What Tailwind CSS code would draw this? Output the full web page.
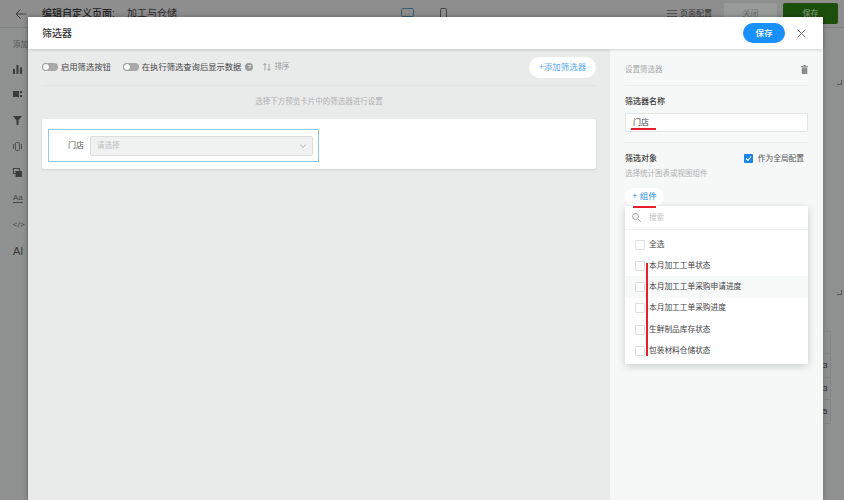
<!DOCTYPE html>
<html lang="zh-CN">
<head>
    <meta charset="UTF-8">
    <meta name="viewport" content="width=device-width, initial-scale=1.0">
    <script src="https://cdn.jsdelivr.net/npm/@tailwindcss/browser@4"></script>
    <title>筛选器</title>
</head>
<body class="relative h-[500px] w-[844px] overflow-hidden whitespace-nowrap bg-[#8f9191] font-['Liberation_Sans','Noto_Sans_CJK_SC',sans-serif] text-[#2f2f2f]">
    <!-- page behind the dialog -->
    <div class="flex h-[28px] items-center border-b border-[#7f8181] bg-[#8e8e8e] pl-[15px] pr-[6px]">
        <svg class="h-[12px] w-[12px] shrink-0 text-[#3c3c3c]" viewBox="0 0 12 12" fill="none" stroke="currentColor" stroke-width="1"><path d="M11.5 6H1M5.5 1.5 1 6l4.5 4.5"/></svg>
        <span class="ml-[15px] w-[73px] shrink-0 text-[10px] font-medium text-[#222]">编辑自定义页面:</span>
        <span class="ml-[12px] w-[50px] shrink-0 text-[10px] text-[#2a2a2a]">加工与仓储</span>
        <svg class="ml-[224px] h-[11px] w-[13px] shrink-0 text-[#3b5a72]" viewBox="0 0 13 11" fill="none" stroke="currentColor"><rect x="0.5" y="0.5" width="12" height="8" rx="1"/><path d="M4 10.5h5"/></svg>
        <svg class="ml-[26px] h-[12px] w-[7px] shrink-0 text-[#444]" viewBox="0 0 7 12" fill="none" stroke="currentColor"><rect x="0.5" y="0.5" width="6" height="11" rx="1"/></svg>
        <svg class="ml-[220px] h-[9px] w-[10px] shrink-0 text-[#444]" viewBox="0 0 10 9" fill="none" stroke="currentColor" stroke-width="0.8"><path d="M0 1.5h10M0 4.5h10M0 7.5h10"/></svg>
        <span class="ml-[3px] w-[32px] shrink-0 text-[8px] text-[#333]">页面配置</span>
        <span class="ml-[12px] flex h-[21px] w-[53px] shrink-0 items-center justify-center rounded-[2px] bg-[#999b9b] text-[8px] text-[#6e6e6e]">关闭</span>
        <span class="ml-[6px] flex h-[21px] w-[55px] shrink-0 items-center justify-center rounded-[2px] bg-[#1c4f0b] text-[8px] text-[#8fa588]">保存</span>
    </div>
    <div class="flex h-[472px]">
        <div class="flex w-[28px] shrink-0 flex-col items-start border-r border-[#7d7f7f] pl-[13px] text-[#3b3b3b]">
            <span class="mt-[11px] w-[15px] overflow-hidden text-[7.5px] text-[#555]">添加</span>
            <svg class="mt-[15px] h-[9px] w-[9px]" viewBox="0 0 9 9" fill="currentColor"><path d="M0 4h2v5H0zM3.5 0h2v9h-2zM7 2.5h2V9H7z"/></svg>
            <svg class="mt-[16px] h-[8px] w-[9px]" viewBox="0 0 9 8" fill="currentColor"><path d="M0 1h6v6H0zM7 1h2v2H7zM7 5h2v2H7z"/></svg>
            <svg class="mt-[18px] h-[9px] w-[9px]" viewBox="0 0 9 9" fill="currentColor"><path d="M0 0h9L5.5 4.5V9h-2V4.500z"/></svg>
            <svg class="mt-[17px] h-[9px] w-[9px]" viewBox="0 0 9 9" fill="none" stroke="currentColor" stroke-width="0.8"><rect x="2.5" y="0.5" width="4" height="8" rx="1"/><path d="M0.5 2v5M8.5 2v5"/></svg>
            <svg class="mt-[17px] h-[9px] w-[9px]" viewBox="0 0 9 9" fill="none" stroke="currentColor" stroke-width="0.9"><rect x="0.5" y="0.5" width="6" height="5"/><rect x="3" y="3.5" width="5.5" height="5" fill="currentColor"/></svg>
            <span class="mt-[16px] border-b border-[#444] text-[8px] leading-[9px] text-[#444]">Aa</span>
            <span class="mt-[17px] text-[8px] leading-[9px] text-[#444]">&lt;/&gt;</span>
            <span class="mt-[16px] text-[11px] font-medium leading-[12px] text-[#3b3b3b]">AI</span>
        </div>
        <!-- leftover bits of the page to the right of the dialog -->
        <div class="ml-auto flex w-[21px] flex-col items-start text-[8px] text-[#222]">
            <span class="ml-[14px] mt-[52px] h-[5px] w-[5px] border-b border-r border-[#555]"></span>
            <span class="ml-[14px] mt-[205px] h-[5px] w-[5px] border-b border-r border-[#555]"></span>
            <span class="mt-[36px] h-[23px] w-[8px] border-y border-r border-[#858787]"></span>
            <span class="flex h-[24px] w-[8px] items-center border-b border-r border-[#858787]">3</span>
            <span class="flex h-[22px] w-[8px] items-center border-b border-r border-[#858787]">3</span>
            <span class="flex h-[24px] w-[8px] items-center border-b border-r border-[#858787]">5</span>
        </div>
    </div>

    <!-- dialog -->
    <div class="absolute left-[28px] top-[17px] flex h-[483px] w-[795px] flex-col bg-white shadow-[0_0_6px_rgba(0,0,0,0.25)]">
        <div class="z-10 flex h-[32px] shrink-0 items-center bg-white pl-[14px] pr-[17px] shadow-[0_1px_3px_rgba(0,0,0,0.15)]">
            <span class="text-[10px] font-medium text-[#333]">筛选器</span>
            <button class="ml-auto flex h-[20px] w-[42px] items-center justify-center rounded-full bg-[#1890ff] text-[8.5px] font-medium text-white">保存</button>
            <svg class="ml-[12px] h-[9px] w-[9px] text-[#666]" viewBox="0 0 9 9" fill="none" stroke="currentColor" stroke-width="0.9"><path d="M0.5 0.5l8 8M8.5 0.5l-8 8"/></svg>
        </div>
        <div class="flex min-h-0 flex-1">
            <!-- left: preview -->
            <div class="flex w-[582px] shrink-0 flex-col bg-[#e9eaea] px-[14px]">
                <div class="flex h-[37px] shrink-0 items-center border-b border-[#e2e3e3] text-[8.3px] text-[#444]">
                    <span class="relative h-[8px] w-[16px] rounded-full bg-[#a8a8a8]"><span class="absolute left-0 top-0 h-[8px] w-[8px] rounded-full border border-[#999] bg-white"></span></span>
                    <span class="ml-[3px]">启用筛选按钮</span>
                    <span class="relative ml-[12px] h-[8px] w-[16px] rounded-full bg-[#a8a8a8]"><span class="absolute left-0 top-0 h-[8px] w-[8px] rounded-full border border-[#999] bg-white"></span></span>
                    <span class="ml-[3px]">在执行筛选查询后显示数据</span>
                    <span class="ml-[4px] flex h-[8px] w-[8px] items-center justify-center rounded-full bg-[#9a9a9a] text-[6px] text-white">?</span>
                    <svg class="ml-[10px] h-[8px] w-[8px] text-[#888]" viewBox="0 0 8 8" fill="none" stroke="currentColor" stroke-width="0.7"><path d="M2 7.5V0.5M0.5 2 2 0.5 3.5 2M6 1v6.500M4.5 6 6 7.5 7.5 6"/></svg>
                    <span class="ml-[3px] text-[7.5px] text-[#9a9a9a]">排序</span>
                    <button class="ml-auto flex h-[21px] w-[67px] items-center justify-center rounded-full bg-white text-[8.5px] text-[#5aa7ee]">+添加筛选器</button>
                </div>
                <p class="mt-[10px] text-center text-[7.5px] leading-[11px] text-[#b2b2b2]">选择下方预览卡片中的筛选器进行设置</p>
                <div class="mt-[12px] h-[50px] rounded-[2px] bg-white px-[6px] pt-[10px] shadow-[0_1px_2px_rgba(0,0,0,0.12)]">
                    <div class="flex h-[33px] w-[271px] items-center border border-[#8fc8ee] pl-[19px] pr-[5px]">
                        <span class="text-[8px] text-[#555]">门店</span>
                        <div class="ml-[6px] flex h-[20px] flex-1 items-center justify-between rounded-[2px] border border-[#dcdcdc] bg-[#f0f1f1] px-[6px] text-[7.5px] text-[#c0c0c0]">
                            <span>请选择</span>
                            <svg class="h-[4px] w-[6px] text-[#999]" viewBox="0 0 6 4" fill="none" stroke="currentColor" stroke-width="0.7"><path d="M0.5 0.5 3 3.5 5.5 0.5"/></svg>
                        </div>
                    </div>
                </div>
            </div>
            <!-- right: settings -->
            <div class="relative flex-1 bg-[#f6f8f8] px-[15px]">
                <div class="flex h-[37px] items-center justify-between border-b border-[#eceeee] pt-[5px]">
                    <span class="text-[7.5px] text-[#a6a6a6]">设置筛选器</span>
                    <svg class="h-[9px] w-[7px] text-[#8a8a8a]" viewBox="0 0 7 9" fill="currentColor"><path d="M0 1h7v1H0zM2.5 0h2v1h-2zM0.7 2.5h5.600V9H0.7z"/></svg>
                </div>
                <p class="mt-[10px] text-[8px] font-medium leading-[11px] text-[#3a3a3a]">筛选器名称</p>
                <div class="relative mt-[6px] flex h-[19px] items-center rounded-[1px] border border-[#e4e6e6] bg-white pl-[7px] text-[8px] text-[#444]">
                    门店
                    <span class="absolute left-[5px] top-[14px] h-[2px] w-[25px] bg-[#e5202e]"></span>
                </div>
                <div class="mt-[10px] flex items-center border-t border-[#eceeee] pt-[10px]">
                    <span class="text-[8px] font-medium leading-[11px] text-[#3a3a3a]">筛选对象</span>
                    <span class="ml-auto flex h-[9px] w-[9px] items-center justify-center rounded-[1px] bg-[#1a86ea]">
                        <svg class="h-[7px] w-[7px] text-white" viewBox="0 0 7 7" fill="none" stroke="currentColor" stroke-width="1.1"><path d="M1 3.5 3 5.5 6 1.5"/></svg>
                    </span>
                    <span class="ml-[5px] mr-[4px] text-[7.7px] text-[#555]">作为全局配置</span>
                </div>
                <p class="mt-[3px] text-[7.5px] leading-[12px] text-[#b0b0b0]">选择统计图表或视图组件</p>
                <button class="relative z-10 mt-[8px] flex h-[18px] w-[39px] items-center justify-center rounded-full bg-white text-[8.5px] text-[#2a8ee0]">
                    + 组件
                    <span class="absolute left-[8px] top-[18px] h-[2px] w-[23px] bg-[#e5202e]"></span>
                </button>
                <!-- component dropdown -->
                <div class="absolute left-[15px] top-[157px] w-[183px] rounded-[1px] bg-white shadow-[0_2px_8px_rgba(0,0,0,0.18)]">
                    <div class="flex h-[24px] items-center border-b border-[#f0f1f1] pl-[7px] text-[7.5px] text-[#c0c0c0]">
                        <svg class="h-[9px] w-[9px] text-[#999]" viewBox="0 0 9 9" fill="none" stroke="currentColor" stroke-width="0.9"><circle cx="3.5" cy="3.5" r="3"/><path d="M5.8 5.8 8.7 8.7"/></svg>
                        <span class="ml-[8px]">搜索</span>
                    </div>
                    <div class="pb-[3px] pt-[4px] text-[7.7px] text-[#444]">
                        <div class="flex h-[21px] items-center pl-[10px]"><span class="h-[10px] w-[10px] rounded-[1px] border border-[#dedede] bg-white"></span><span class="ml-[4px]">全选</span></div>
                        <div class="flex h-[21.3px] items-center pl-[10px]"><span class="h-[10px] w-[10px] rounded-[1px] border border-[#dedede] bg-white"></span><span class="ml-[4px]">本月加工工单状态</span></div>
                        <div class="flex h-[21.3px] items-center bg-[#f7f8f8] pl-[10px]"><span class="h-[10px] w-[10px] rounded-[1px] border border-[#dedede] bg-white"></span><span class="ml-[4px]">本月加工工单采购申请进度</span></div>
                        <div class="flex h-[21.3px] items-center pl-[10px]"><span class="h-[10px] w-[10px] rounded-[1px] border border-[#dedede] bg-white"></span><span class="ml-[4px]">本月加工工单采购进度</span></div>
                        <div class="flex h-[21.3px] items-center pl-[10px]"><span class="h-[10px] w-[10px] rounded-[1px] border border-[#dedede] bg-white"></span><span class="ml-[4px]">生鲜制品库存状态</span></div>
                        <div class="flex h-[21.3px] items-center pl-[10px]"><span class="h-[10px] w-[10px] rounded-[1px] border border-[#dedede] bg-white"></span><span class="ml-[4px]">包装材料仓储状态</span></div>
                    </div>
                    <span class="absolute left-[21px] top-[57px] h-[93px] w-[2px] bg-[#e5202e]"></span>
                </div>
            </div>
        </div>
    </div>
</body>
</html>
